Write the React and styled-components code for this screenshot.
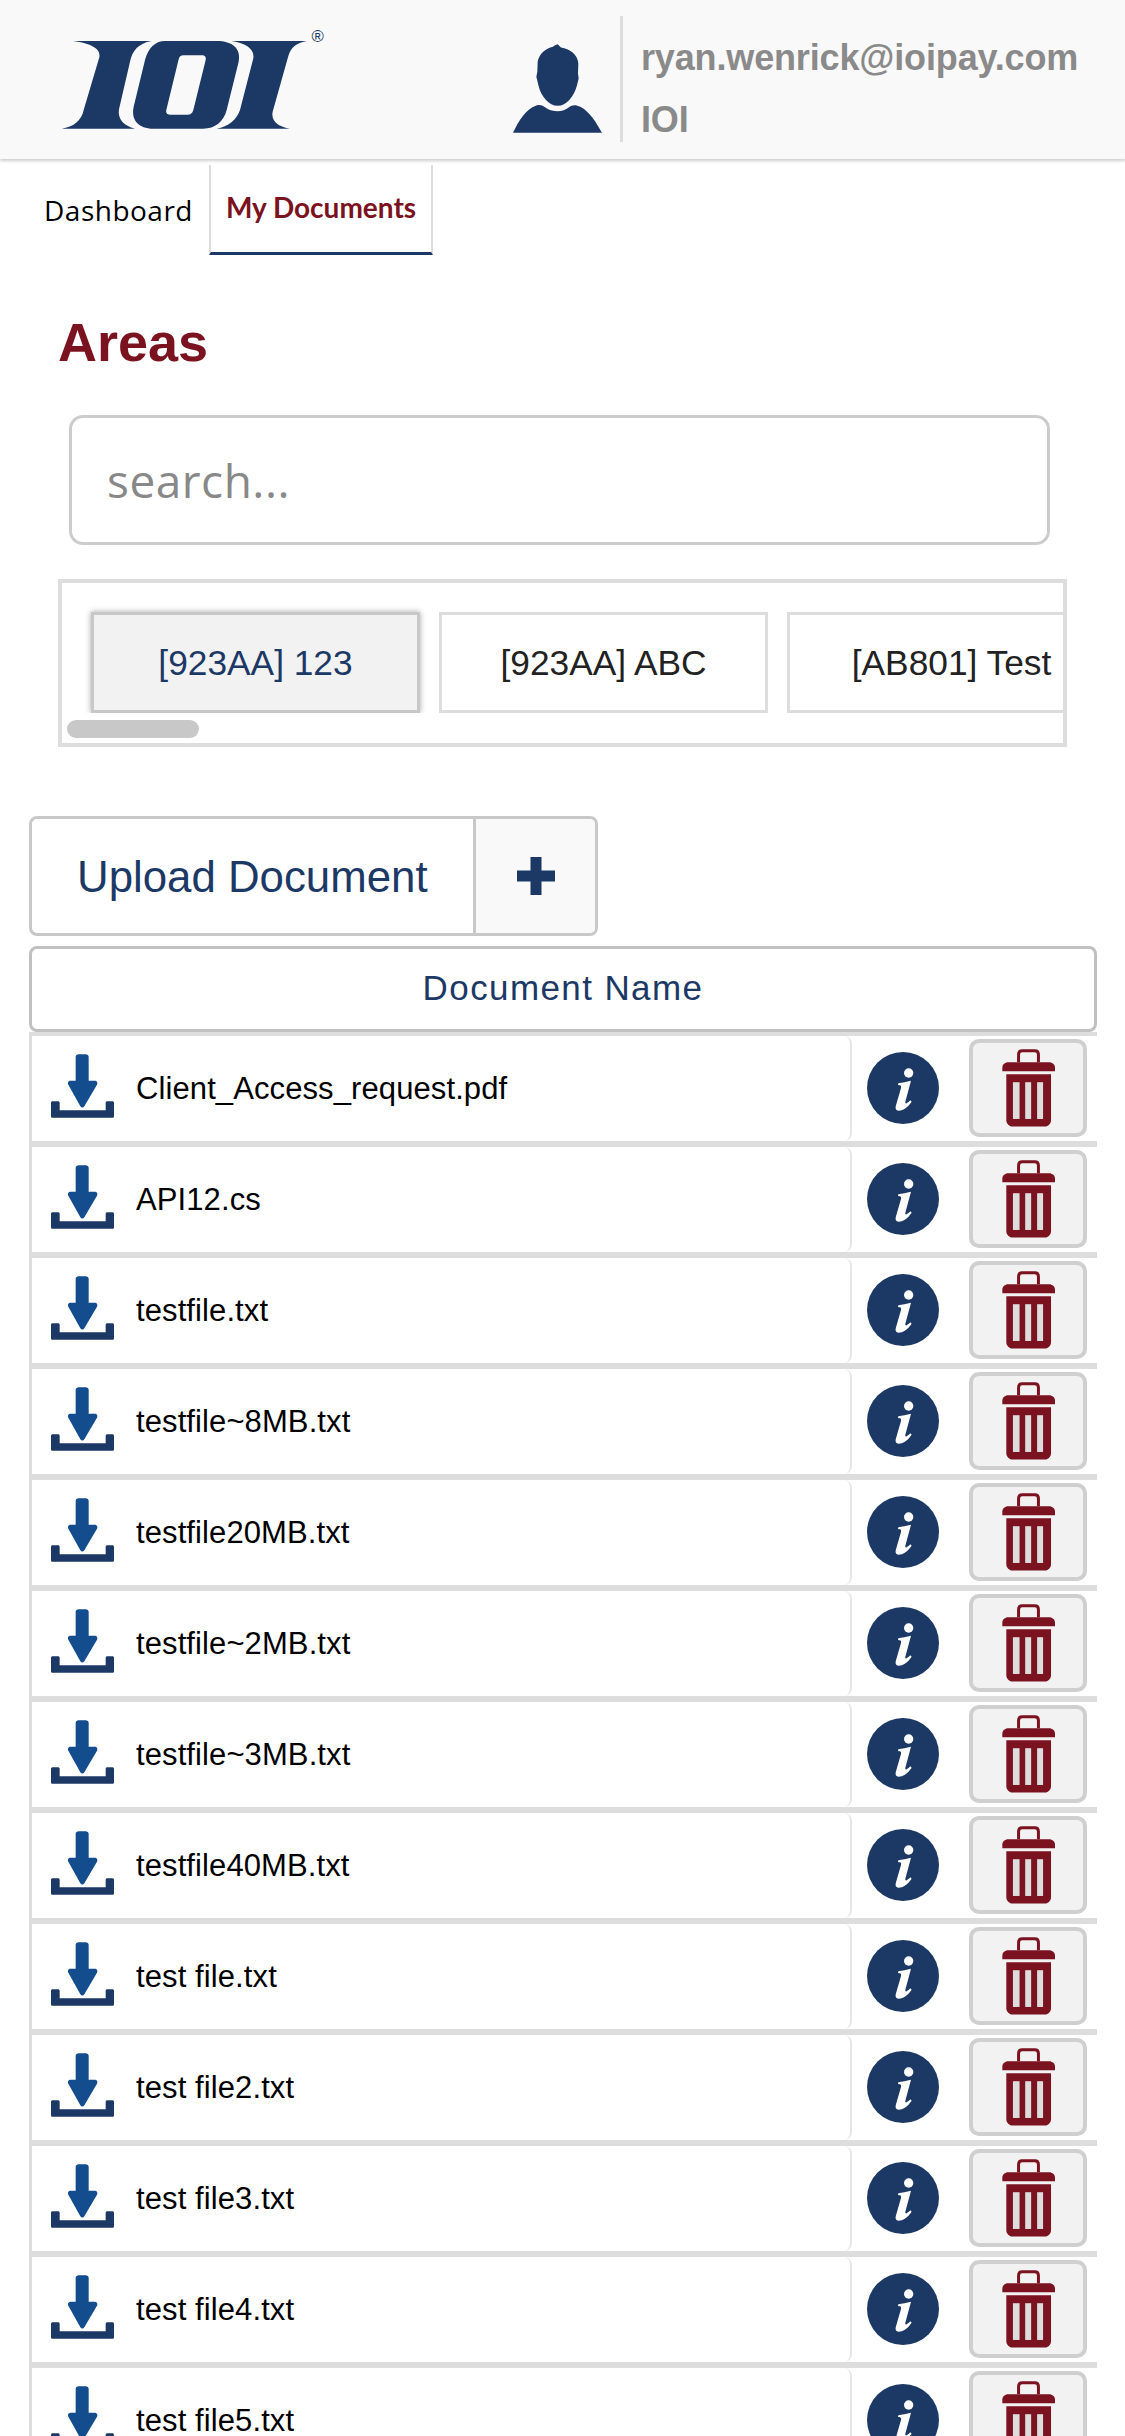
import React from 'react';
import styled, { createGlobalStyle } from 'styled-components';

const NAVY = '#1c3966';
const WINE = '#7b1220';

const files = [
  'Client_Access_request.pdf',
  'API12.cs',
  'testfile.txt',
  'testfile~8MB.txt',
  'testfile20MB.txt',
  'testfile~2MB.txt',
  'testfile~3MB.txt',
  'testfile40MB.txt',
  'test file.txt',
  'test file2.txt',
  'test file3.txt',
  'test file4.txt',
  'test file5.txt',
];

function Logo() {
  return (
    <LogoSvg viewBox="0 0 900 390">
      <path fill={NAVY} d="M100 63H335C295 70 277 92 270 125L237 268C232 298 252 318 285 326H65C100 321 124 303 131 270L178 112C184 85 150 70 100 63Z" />
      <path fill={NAVY} fillRule="evenodd" d="M375 63H530C578 63 604 86 596 125L560 270C551 305 525 326 490 326H340C296 326 272 300 281 260L315 120C325 85 345 63 375 63ZM430 106C422 106 418 110 416 118L379 270C377 278 381 284 390 284H443C452 284 457 280 460 270L497 120C499 112 495 106 485 106Z" />
      <path fill={NAVY} d="M575 63H800C765 70 752 85 745 108L698 275C692 303 715 321 750 326H530C565 320 590 300 600 270L640 115C644 88 620 70 575 63Z" />
      <text x="833" y="66" textAnchor="middle" fontSize="50" fontFamily="Liberation Sans, sans-serif" fill={NAVY}>®</text>
    </LogoSvg>
  );
}

function Person() {
  return (
    <PersonSvg viewBox="38 42 267 266">
      <path fill={NAVY} d="M38 308C55 272 75 238 108 226C120 222 130 228 140 235C158 246 190 246 205 232C215 224 225 222 240 230C268 244 288 278 305 308Z" />
      <path fill={NAVY} d="M172 42L182 52C208 56 232 72 234 100L233 130L235 145L230 165C222 198 198 227 172 227C146 227 122 198 115 168L108 140L111 125L112 95C116 72 135 55 158 50L163 46Z" />
    </PersonSvg>
  );
}

function DownloadIcon() {
  return (
    <DownloadSvg viewBox="33 42 189 191">
      <path fill="#134d8d" d="M107 50C107 45 111 42 116 42H137C142 42 146 45 146 50V122H164C171 122 174 128 171 134L133 198C130 203 124 203 121 198L85 134C82 128 85 122 92 122H107Z" />
      <path fill={NAVY} d="M33 188C33 185 35 183 38 183H54C57 183 59 185 59 188V210H197V188C197 185 199 183 202 183H217C220 183 222 185 222 188V228C222 231 220 233 217 233H38C35 233 33 231 33 228Z" />
    </DownloadSvg>
  );
}

function InfoIcon() {
  return (
    <InfoSvg viewBox="201 365 216 216">
      <circle cx="309" cy="473" r="108" fill={NAVY} />
      <circle cx="326" cy="428" r="14" fill="#fff" />
      <path fill="#fff" d="M295 459C306 457 320 454 333 451L316 514C315 521 319 522 331 510L335 514C323 532 308 541 296 541C288 541 285 535 288 525L303 473C305 466 301 464 294 464Z" />
    </InfoSvg>
  );
}

function TrashIcon() {
  return (
    <TrashSvg viewBox="605 357 160 233">
      <path fill="none" stroke={WINE} strokeWidth="9" d="M655 396V372C655 365 659 361 666 361H704C711 361 715 365 715 372V396" />
      <path fill={WINE} d="M606 423V412C606 403 614 396 624 396H747C757 396 765 403 765 412V423Z" />
      <path fill={WINE} d="M618 432H753V570C753 582 744 590 733 590H638C627 590 618 582 618 570Z" />
      <rect x="638" y="456" width="20" height="111" fill="#ddd" />
      <rect x="675" y="456" width="18" height="111" fill="#ddd" />
      <rect x="711" y="456" width="18" height="111" fill="#ddd" />
    </TrashSvg>
  );
}

function App() {
  return (
    <Page>
      <GlobalStyle />
      <TopBar>
        <Logo />
        <Person />
        <UserInfo>
          <UserLine>ryan.wenrick@ioipay.com</UserLine>
          <UserLine>IOI</UserLine>
        </UserInfo>
      </TopBar>

      <Tabs>
        <Tab>Dashboard</Tab>
        <ActiveTab>My Documents</ActiveTab>
      </Tabs>

      <Title>Areas</Title>
      <Search placeholder="search..." />

      <AreaBox>
        <AreaTrack>
          <AreaButton $active>[923AA] 123</AreaButton>
          <AreaButton>[923AA] ABC</AreaButton>
          <AreaButton>[AB801] Test</AreaButton>
        </AreaTrack>
        <ScrollThumb />
      </AreaBox>

      <UploadButton>
        <UploadLabel>Upload Document</UploadLabel>
        <UploadPlus />
      </UploadButton>

      <TableHead>Document Name</TableHead>

      <Rows>
        {files.map((name, i) => (
          <Row key={i}>
            <NameCell>
              <DownloadIcon />
              <FileName>{name}</FileName>
            </NameCell>
            <InfoIcon />
            <DeleteButton>
              <TrashIcon />
            </DeleteButton>
          </Row>
        ))}
      </Rows>
    </Page>
  );
}
export default App;

const GlobalStyle = createGlobalStyle`
  html, body {
    margin: 0;
    padding: 0;
    overflow: hidden;
    background: #fff;
  }
  * {
    box-sizing: border-box;
  }
`;

const Page = styled.div`
  width: 1125px;
  height: 2436px;
  overflow: hidden;
  font-family: "Liberation Sans", Arial, sans-serif;
  background: #fff;
`;

const TopBar = styled.header`
  display: flex;
  align-items: flex-start;
  height: 159px;
  background: #f9f9f9;
  box-shadow: 0 2px 3px rgba(0, 0, 0, 0.2);
`;

const LogoSvg = styled.svg`
  width: 300px;
  height: 130px;
  margin: 20px 0 0 40px;
  flex: none;
`;

const PersonSvg = styled.svg`
  width: 89px;
  height: 89px;
  margin: 44px 0 0 173px;
  flex: none;
`;

const UserInfo = styled.div`
  display: flex;
  flex-direction: column;
  gap: 18px;
  height: 126px;
  margin: 16px 0 0 18px;
  padding: 20px 0 0 18px;
  border-left: 3px solid #ddd;
`;

const UserLine = styled.div`
  font-size: 36px;
  line-height: 44px;
  letter-spacing: -0.15px;
  font-weight: 700;
  color: #8a8a8a;
`;

const Tabs = styled.nav`
  display: flex;
  margin-top: 6px;
  padding-left: 28px;
`;

const Tab = styled.div`
  height: 90px;
  display: flex;
  align-items: center;
  padding: 0 16px;
  white-space: nowrap;
  font-family: "Open Sans", sans-serif;
  font-size: 28px;
  letter-spacing: 0.5px;
  color: #000;
`;

const ActiveTab = styled(Tab)`
  width: 224px;
  justify-content: center;
  padding: 0 0 4px;
  font-family: Lato, sans-serif;
  font-size: 28px;
  letter-spacing: 0;
  font-weight: 700;
  color: ${WINE};
  border-left: 2px solid #ddd;
  border-right: 2px solid #ddd;
  border-bottom: 3px solid ${NAVY};
`;

const Title = styled.h1`
  margin: 56px 0 0 58px;
  font-size: 54px;
  line-height: 62px;
  font-weight: 700;
  color: ${WINE};
`;

const Search = styled.input`
  display: block;
  width: 981px;
  height: 130px;
  margin: 42px 0 0 69px;
  padding: 0 35px;
  border: 3px solid #ccc;
  border-radius: 14px;
  outline: none;
  background: #fff;
  font-family: "Open Sans", sans-serif;
  font-size: 46px;
  letter-spacing: 0.5px;

  &::placeholder {
    color: #888;
    opacity: 1;
  }
`;

const AreaBox = styled.section`
  width: 1009px;
  height: 168px;
  margin: 34px 0 0 58px;
  border: 4px solid #ddd;
`;

const AreaTrack = styled.div`
  display: flex;
  gap: 19px;
  padding: 29px 0 0 29px;
  overflow: hidden;
`;

const AreaButton = styled.div`
  flex: none;
  width: 329px;
  height: 101px;
  display: flex;
  align-items: center;
  justify-content: center;
  font-size: 35.3px;
  color: ${(p) => (p.$active ? NAVY : '#222')};
  background: ${(p) => (p.$active ? '#f2f2f2' : '#fff')};
  border: 3px solid ${(p) => (p.$active ? '#c8c8c8' : '#ddd')};
  box-shadow: ${(p) => (p.$active ? '0 0 6px rgba(0, 0, 0, 0.35)' : 'none')};
`;

const ScrollThumb = styled.div`
  width: 132px;
  height: 18px;
  margin: 7px 0 0 5px;
  border-radius: 9px;
  background: #c8c8c8;
`;

const UploadButton = styled.div`
  display: flex;
  width: 569px;
  height: 120px;
  margin: 69px 0 0 29px;
  border: 3px solid #c8c8c8;
  border-radius: 8px;
  overflow: hidden;
`;

const UploadLabel = styled.div`
  width: 441px;
  display: flex;
  align-items: center;
  padding: 2px 0 0 45px;
  font-size: 43.8px;
  color: ${NAVY};
`;

const UploadPlus = styled.div`
  flex: 1;
  position: relative;
  background: #f9f9f9;
  border-left: 3px solid #c8c8c8;

  &::before,
  &::after {
    content: "";
    position: absolute;
    left: 50%;
    top: 50%;
    background: ${NAVY};
    transform: translate(-50%, -50%);
  }
  &::before {
    width: 38px;
    height: 11px;
  }
  &::after {
    width: 11px;
    height: 38px;
  }
`;

const TableHead = styled.div`
  width: 1068px;
  height: 86px;
  margin: 10px 0 0 29px;
  padding-bottom: 2px;
  display: flex;
  align-items: center;
  justify-content: center;
  border: 3px solid #c0c0c0;
  border-radius: 8px;
  font-size: 35px;
  letter-spacing: 1.4px;
  color: ${NAVY};
`;

const Rows = styled.div`
  width: 1068px;
  margin-left: 29px;
  border-top: 4px solid #ddd;
  border-left: 3px solid #ddd;
`;

const Row = styled.div`
  height: 111px;
  display: flex;
  align-items: center;
  border-bottom: 6px solid #ddd;
`;

const NameCell = styled.div`
  width: 820px;
  height: 100%;
  display: flex;
  align-items: center;
  padding-left: 19px;
  border-right: 2px solid #e6e6e6;
  border-radius: 0 8px 8px 0;
`;

const DownloadSvg = styled.svg`
  width: 63px;
  height: 64px;
  margin-bottom: 6px;
  flex: none;
`;

const FileName = styled.div`
  margin-left: 22px;
  font-size: 31px;
  letter-spacing: 0.1px;
  color: #000;
`;

const InfoSvg = styled.svg`
  width: 72px;
  height: 72px;
  margin: 0 0 2px 15px;
  flex: none;
`;

const DeleteButton = styled.div`
  width: 118px;
  height: 98px;
  margin: 0 0 2px 30px;
  flex: none;
  display: flex;
  align-items: center;
  justify-content: center;
  background: #f2f2f2;
  border: 4px solid #cfcfcf;
  border-radius: 10px;
`;

const TrashSvg = styled.svg`
  width: 53px;
  height: 78px;
`;
